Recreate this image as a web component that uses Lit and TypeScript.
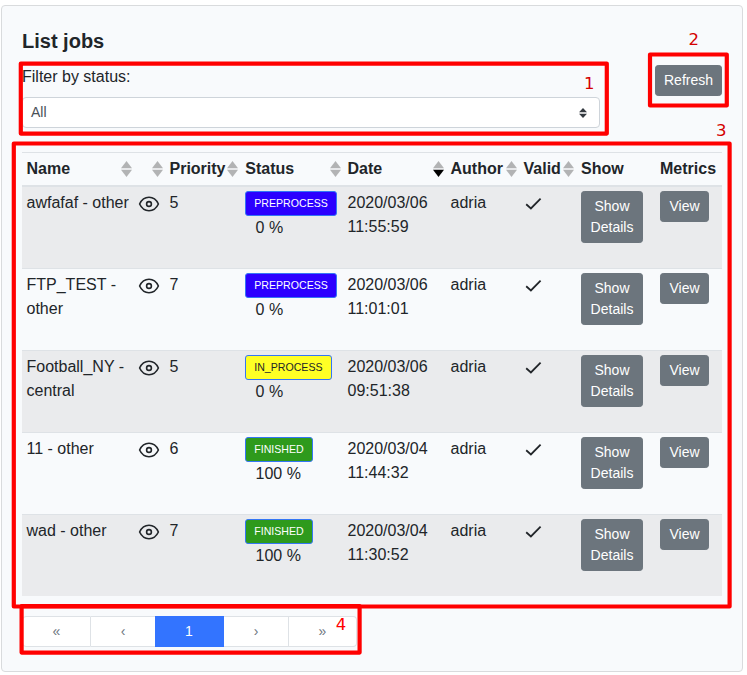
import { LitElement, html, svg, css } from "lit";
import { customElement } from "lit/decorators.js";
import { classMap } from "lit/directives/class-map.js";

interface Job {
  name: string;
  priority: number;
  status: "PREPROCESS" | "IN_PROCESS" | "FINISHED";
  percent: number;
  date: string;
  author: string;
}

const JOBS: Job[] = [
  { name: "awfafaf - other", priority: 5, status: "PREPROCESS", percent: 0, date: "2020/03/06 11:55:59", author: "adria" },
  { name: "FTP_TEST - other", priority: 7, status: "PREPROCESS", percent: 0, date: "2020/03/06 11:01:01", author: "adria" },
  { name: "Football_NY - central", priority: 5, status: "IN_PROCESS", percent: 0, date: "2020/03/06 09:51:38", author: "adria" },
  { name: "11 - other", priority: 6, status: "FINISHED", percent: 100, date: "2020/03/04 11:44:32", author: "adria" },
  { name: "wad - other", priority: 7, status: "FINISHED", percent: 100, date: "2020/03/04 11:30:52", author: "adria" },
];

const COLUMNS = [
  { label: "Name", sort: "both" },
  { label: "", sort: "both" },
  { label: "Priority", sort: "both" },
  { label: "Status", sort: "both" },
  { label: "Date", sort: "desc" },
  { label: "Author", sort: "both" },
  { label: "Valid", sort: "both" },
  { label: "Show", sort: "" },
  { label: "Metrics", sort: "" },
];

// Highlighted regions: outline box plus its number
const MARKS = [
  { x: 20.8, y: 63.6, w: 586, h: 70, n: "1", tx: 584, ty: 89.3, color: "#d40000" },
  { x: 650, y: 54.5, w: 76.8, h: 51, n: "2", tx: 688.5, ty: 45.3, color: "#d40000" },
  { x: 13.8, y: 143.5, w: 715.8, h: 463, n: "3", tx: 716, ty: 136, color: "#d40000" },
  { x: 21.6, y: 606.2, w: 338, h: 46.4, n: "4", tx: 335.8, ty: 630, color: "#ff0000" },
];

@customElement("app-root")
export class AppRoot extends LitElement {
  static styles = css`
    :host {
      display: block;
      position: relative;
      height: 675px;
      padding: 5px 0 0 1px;
      box-sizing: border-box;
      overflow: hidden;
      background: #fff;
      color: #212529;
      font: 16px/24px "Liberation Sans", Arial, sans-serif;
    }
    * { box-sizing: border-box; }
    .card {
      width: 742px;
      height: 667px;
      padding: 20px;
      border: 1px solid #d9dbdd;
      border-radius: 4px;
      background: #f8fafc;
    }
    .top {
      display: flex;
      justify-content: space-between;
      height: 126px;
    }
    .filter { width: 578px; }
    h1 {
      margin: 3px 0 12px;
      font-size: 20px;
      line-height: 24px;
      font-weight: bold;
    }
    .select {
      display: flex;
      align-items: center;
      justify-content: space-between;
      height: 31px;
      margin-top: 8px;
      padding: 0 12px 0 8px;
      border: 1px solid #ced4da;
      border-radius: 4px;
      background: #fff;
      color: #495057;
      font-size: 14px;
      line-height: 21px;
    }
    .select span { margin-top: -1px; }
    .select svg { width: 8px; height: 10px; margin-top: 1px; }
    .btn {
      display: inline-block;
      padding: 4px 8px;
      border: 1px solid #6c757d;
      border-radius: 3.2px;
      background: #6c757d;
      color: #fff;
      font: 14px/21px "Liberation Sans", Arial, sans-serif;
      text-align: center;
    }
    .refresh { height: 31px; width: 67px; margin-top: 39px; padding-inline: 0; }
    .row {
      display: grid;
      grid-template-columns: 112.5px 30.5px 75.75px 102.25px 103px 73px 57.5px 79px 66.5px;
      height: 82px;
      border-top: 1px solid #dee2e6;
    }
    .head {
      height: 35px;
      border-bottom: 2px solid #dee2e6;
      font-weight: bold;
    }
    .body .row:first-child { height: 81px; border-top: 0; }
    .row.striped { background: #eaebed; }
    .cell { padding: 4px 4.5px; min-width: 0; }
    .th {
      display: flex;
      justify-content: space-between;
      align-items: center;
      padding: 0 2.5px 0 4.5px;
      white-space: nowrap;
    }
    .sort { flex: none; width: 11px; height: 16px; margin-left: auto; }
    .eye { display: block; width: 22px; height: 22px; margin: 2px 0 0 -1px; }
    .check { display: block; width: 18px; height: 18px; margin-top: 4px; }
    .badge {
      display: table;
      height: 25px;
      padding: 0 8px;
      border: 1px solid #3476f5;
      border-radius: 3px;
      font-size: 10.6px;
      line-height: 23px;
      color: #fff;
      background: #2b00ff;
    }
    .in-process { background: #ffff25; color: #212529; }
    .finished { background: #2e9a1c; }
    .percent { padding-left: 10.3px; line-height: 24px; }
    .show { width: 62px; padding-inline: 0; }
    .view { width: 49px; padding-inline: 0; }
    .pages {
      display: flex;
      width: 335px;
      height: 31px;
      margin-top: 20px;
      border-radius: 4px;
      font-size: 14px;
      color: #6c757d;
    }
    .page {
      border: 1px solid #dee2e6;
      border-left-width: 0;
      background: #fff;
      line-height: 29px;
      text-align: center;
    }
    .page.first { width: 69px; border-left-width: 1px; border-radius: 4px 0 0 4px; }
    .page.prev { width: 64px; border-right: 0; }
    .page.current { width: 69px; border-color: #3374ff; background: #3374ff; color: #fff; }
    .page.next { width: 65px; }
    .page.last { width: 68px; border-radius: 0 4px 4px 0; }
    .marks {
      position: absolute;
      inset: 0;
      width: 747px;
      height: 675px;
      pointer-events: none;
    }
    .box { fill: none; stroke: #ff0000; stroke-width: 4.2; stroke-linejoin: round; }
    .num { font: 16.5px "DejaVu Sans", sans-serif; }
  `;

  private sortIcon(kind: string) {
    return html`<svg class="sort" viewBox="0 0 11 16">
      <path d="M5.5 0L11 7.300H0z" fill="#b2b3b4" />
      <path d="M5.5 16L11 8.700H0z" fill=${kind === "desc" ? "#000" : "#b2b3b4"} />
    </svg>`;
  }

  private renderJob(job: Job, index: number) {
    const badge = {
      badge: true,
      "in-process": job.status === "IN_PROCESS",
      finished: job.status === "FINISHED",
    };
    return html`<div class=${classMap({ row: true, striped: index % 2 === 0 })}>
      <div class="cell">${job.name}</div>
      <div class="cell">
        <svg class="eye" viewBox="0 0 22 22" fill="none" stroke="#212529" stroke-width="1.6">
          <path d="M1.6 11C3.7 6.5 7 4.3 11 4.3s7.3 2.2 9.4 6.7c-2.1 4.5-5.4 6.7-9.4 6.7S3.7 15.5 1.6 11z" stroke-linejoin="round" />
          <circle cx="11" cy="11" r="2.4" />
        </svg>
      </div>
      <div class="cell">${job.priority}</div>
      <div class="cell">
        <span class=${classMap(badge)}>${job.status}</span>
        <div class="percent">${job.percent} %</div>
      </div>
      <div class="cell">${job.date}</div>
      <div class="cell">${job.author}</div>
      <div class="cell">
        <svg class="check" viewBox="0 0 18 18" fill="none" stroke="#212529" stroke-width="1.8">
          <path d="M2.2 9.3L6.900 13.4L16.600 3.7" />
        </svg>
      </div>
      <div class="cell"><span class="btn show">Show<br />Details</span></div>
      <div class="cell"><span class="btn view">View</span></div>
    </div>`;
  }

  render() {
    return html`
      <section class="card">
        <div class="top">
          <div class="filter">
            <h1>List jobs</h1>
            <div>Filter by status:</div>
            <div class="select">
              <span>All</span>
              <svg viewBox="0 0 8 10" fill="#343a40"><path d="M4 0L8 4.200H0zM4 10L0 5.800h8z" /></svg>
            </div>
          </div>
          <span class="btn refresh">Refresh</span>
        </div>
        <div class="row head">
          ${COLUMNS.map((c) => html`<div class="th"><span>${c.label}</span>${c.sort ? this.sortIcon(c.sort) : ""}</div>`)}
        </div>
        <div class="body">${JOBS.map((job, i) => this.renderJob(job, i))}</div>
        <nav class="pages">
          <span class="page first">«</span>
          <span class="page prev">‹</span>
          <span class="page current">1</span>
          <span class="page next">›</span>
          <span class="page last">»</span>
        </nav>
      </section>
      <svg class="marks" viewBox="0 0 747 675">
        ${MARKS.map(
          (m) => svg`<rect class="box" x=${m.x} y=${m.y} width=${m.w} height=${m.h} />
            <text class="num" x=${m.tx} y=${m.ty} fill=${m.color}>${m.n}</text>`,
        )}
      </svg>
    `;
  }
}
